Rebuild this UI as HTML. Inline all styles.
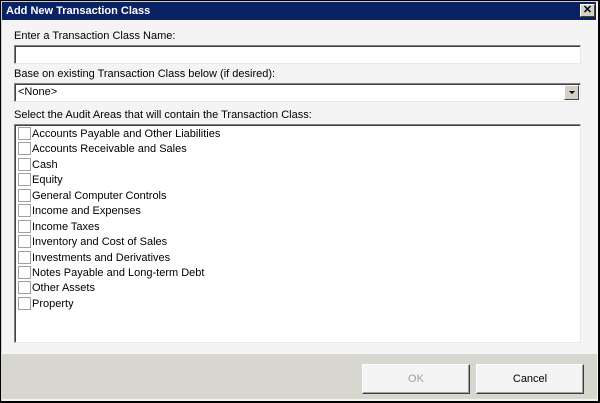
<!DOCTYPE html>
<html><head><style>
*{margin:0;padding:0;box-sizing:border-box}
body{width:600px;height:403px;background:#000;font-family:"Liberation Sans",sans-serif;font-size:11px;color:#000;position:relative;overflow:hidden}
.win{position:absolute;left:1px;top:1px;width:597px;height:400px;background:#f4f4f4;border-left:1px solid #d4d0c8;border-top:1px solid #d4d0c8}
.title{position:absolute;left:2px;top:2px;width:594px;height:18px;background:#0a2163;color:#fff;font-weight:bold;font-size:11px;line-height:18px;padding-left:4px}
.close{position:absolute;left:580px;top:4px;width:15px;height:13px;background:#d4d0c8;border:1px solid;border-color:#fff #404040 #404040 #fff;color:#000;font:bold 11px/11px "Liberation Sans",sans-serif;text-align:center}
.lbl{position:absolute;left:14px;font-size:11px;color:#000}
.inp{position:absolute;left:14px;width:567px;height:19px;background:#fff;border:1px solid;border-color:#808080 #e8e8e8 #e8e8e8 #808080;box-shadow:inset 1px 1px 0 #404040}
.dd{position:absolute;right:1px;top:1px;width:15px;height:15px;background:#d4d0c8;border:1px solid;border-color:#fff #404040 #404040 #fff}
.dd:after{content:"";position:absolute;left:4px;top:5px;border-left:3px solid transparent;border-right:3px solid transparent;border-top:3px solid #000}
.list{position:absolute;left:14px;top:124px;width:567px;height:219px;background:#fff;border:1px solid;border-color:#808080 #e8e8e8 #e8e8e8 #808080;box-shadow:inset 1px 1px 0 #404040;padding-top:2px}
.it{height:15.45px;line-height:15px;padding-left:17px;position:relative;white-space:nowrap}
.it:before{content:"";position:absolute;left:3px;top:0px;width:11px;height:11px;border:1px solid #a0a0a0;background:#fff}
.foot{position:absolute;left:1px;top:354px;width:596px;height:45px;background:#d7d6cf}
.btn{position:absolute;top:364px;width:108px;height:30px;background:#f4f4f4;border:1px solid;border-color:#fff #404040 #404040 #fff;box-shadow:inset -1px -1px 0 #a0a0a0;text-align:center;line-height:28px;font-size:11px}
</style></head><body>
<div class="win"></div>
<div class="title">Add New Transaction Class</div>
<div class="close">✕</div>
<div class="lbl" style="top:30px">Enter a Transaction Class Name:</div>
<div class="inp" style="top:45px"></div>
<div class="lbl" style="top:68px">Base on existing Transaction Class below (if desired):</div>
<div class="inp" style="top:83px;line-height:17px;padding-left:3px">&lt;None&gt;<div class="dd"></div></div>
<div class="lbl" style="top:109px">Select the Audit Areas that will contain the Transaction Class:</div>
<div class="list">
<div class="it">Accounts Payable and Other Liabilities</div>
<div class="it">Accounts Receivable and Sales</div>
<div class="it">Cash</div>
<div class="it">Equity</div>
<div class="it">General Computer Controls</div>
<div class="it">Income and Expenses</div>
<div class="it">Income Taxes</div>
<div class="it">Inventory and Cost of Sales</div>
<div class="it">Investments and Derivatives</div>
<div class="it">Notes Payable and Long-term Debt</div>
<div class="it">Other Assets</div>
<div class="it">Property</div>
</div>
<div class="foot"></div>
<div class="btn" style="left:362px;color:#a0a0a0">OK</div>
<div class="btn" style="left:476px">Cancel</div>
</body></html>
